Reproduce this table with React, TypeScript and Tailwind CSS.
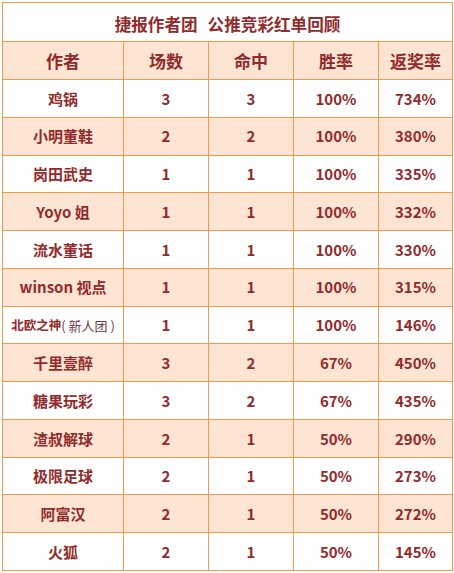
import React from "react";

type Row = { name: React.ReactNode; n: string; hit: string; rate: string; ret: string };

const rows: Row[] = [
  { name: "鸡锅", n: "3", hit: "3", rate: "100%", ret: "734%" },
  { name: "小明董鞋", n: "2", hit: "2", rate: "100%", ret: "380%" },
  { name: "岗田武史", n: "1", hit: "1", rate: "100%", ret: "335%" },
  { name: "Yoyo 姐", n: "1", hit: "1", rate: "100%", ret: "332%" },
  { name: "流水董话", n: "1", hit: "1", rate: "100%", ret: "330%" },
  { name: "winson 视点", n: "1", hit: "1", rate: "100%", ret: "315%" },
  {
    name: (
      <span className="whitespace-nowrap flex items-center">
        <span className="text-[12.5px] font-bold">北欧之神</span>
        <span className="text-[13px] font-normal text-[#6e3a4e]">(&nbsp;新人团&nbsp;)</span>
      </span>
    ),
    n: "1",
    hit: "1",
    rate: "100%",
    ret: "146%",
  },
  { name: "千里壹醉", n: "3", hit: "2", rate: "67%", ret: "450%" },
  { name: "糖果玩彩", n: "3", hit: "2", rate: "67%", ret: "435%" },
  { name: "渣叔解球", n: "2", hit: "1", rate: "50%", ret: "290%" },
  { name: "极限足球", n: "2", hit: "1", rate: "50%", ret: "273%" },
  { name: "阿富汉", n: "2", hit: "1", rate: "50%", ret: "272%" },
  { name: "火狐", n: "2", hit: "1", rate: "50%", ret: "145%" },
];

const headers = ["作者", "场数", "命中", "胜率", "返奖率"];

export default function App() {
  return (
    <div className="w-[454px] h-[573px] bg-white pt-[2px] pl-[2px]">
      <div
        className="w-[451px] bg-[#f4994c] p-px grid grid-cols-[120px_84px_84px_84px_73px] grid-rows-[38px_37px_repeat(13,36.77px)] gap-px text-[#922b2c] font-bold"
        style={{ fontFamily: '"Noto Sans CJK SC", "Noto Sans", sans-serif' }}
      >
        <div className="col-span-5 bg-white flex items-center justify-center text-[16.6px] pt-[4px]">
          <span>捷报作者团</span>
          <span className="w-[10px]" />
          <span>公推竞彩红单回顾</span>
        </div>
        {headers.map((h) => (
          <div key={h} className="bg-[#fde4d3] flex items-center justify-center text-[17px] pt-px">
            {h}
          </div>
        ))}
        {rows.map((r, i) => {
          const bg = i % 2 === 0 ? "bg-white" : "bg-[#fde4d3]";
          return (
            <React.Fragment key={i}>
              <div className={`${bg} flex items-center justify-center text-[15px] pt-px`}>{r.name}</div>
              <div className={`${bg} flex items-center justify-center text-[15px] pt-px`}>{r.n}</div>
              <div className={`${bg} flex items-center justify-center text-[15px] pt-px`}>{r.hit}</div>
              <div className={`${bg} flex items-center justify-center text-[15px] pt-px`}>{r.rate}</div>
              <div className={`${bg} flex items-center justify-center text-[15px] pt-px`}>{r.ret}</div>
            </React.Fragment>
          );
        })}
      </div>
    </div>
  );
}
